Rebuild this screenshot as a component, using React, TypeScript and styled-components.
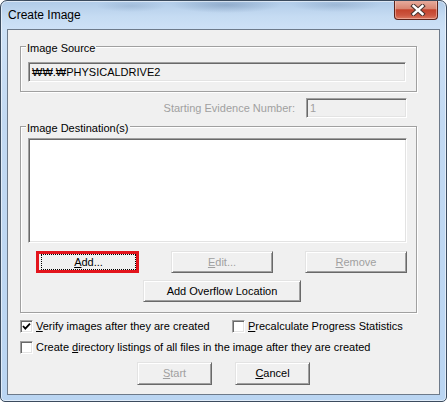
import React from "react";
import styled, { createGlobalStyle } from "styled-components";

const Global = createGlobalStyle`
  html, body { margin: 0; padding: 0; background: #ffffff; }
  body { font-family: "Liberation Sans", Arial, sans-serif; }
  #root { width: 447px; height: 402px; }
  * { box-sizing: border-box; }
`;

const Window = styled.div`
  width: 447px;
  height: 402px;
  border: 1px solid #3b4b5e;
  border-radius: 7px 7px 5px 5px;
  padding: 0 6px 6px;
  display: flex;
  flex-direction: column;
  overflow: hidden;
  box-shadow: inset 0 0 0 1px rgba(255, 255, 255, 0.55);
  background:
    radial-gradient(ellipse 55px 8px at 225px 4px, rgba(70, 100, 140, 0.32), transparent),
    radial-gradient(ellipse 45px 7px at 335px 4px, rgba(70, 100, 140, 0.22), transparent),
    radial-gradient(ellipse 35px 6px at 130px 5px, rgba(70, 100, 140, 0.18), transparent),
    linear-gradient(180deg, #b0cbe8 0px, #c5dbf2 15px, #cde1f6 28px, #c2d9f2 120px, #bad5f2 100%);
`;

const TitleBar = styled.div`
  height: 28px;
  display: flex;
  align-items: flex-start;
  justify-content: space-between;
  flex: none;
`;

const Title = styled.div`
  margin-top: 7px;
  padding-left: 1px;
  font-size: 12px;
  line-height: 14px;
  color: #000;
`;

const CloseButton = styled.div`
  width: 44px;
  height: 20px;
  margin-top: -1px;
  margin-right: 2px;
  border: 1px solid #5c231a;
  border-top: none;
  border-radius: 0 0 4px 4px;
  background: linear-gradient(180deg, #e8b0a2 0%, #d98672 45%, #c4432c 52%, #cc5640 80%, #dc7a62 100%);
  box-shadow: inset 0 0 0 1px rgba(255, 220, 210, 0.45);
  display: flex;
  align-items: center;
  justify-content: center;
`;

const Content = styled.div`
  flex: 1;
  border: 1px solid #6d7a8a;
  background: #f0f0f0;
  display: flex;
  flex-direction: column;
  align-items: flex-start;
  font-size: 11px;
  color: #000;
`;

const Group = styled.div<{ $top: number; $height: number }>`
  position: relative;
  width: 397px;
  height: ${(p) => p.$height}px;
  margin: ${(p) => p.$top}px 0 0 12px;
  border: 1px solid #a0a0a0;
  box-shadow: inset 1px 1px 0 #ffffff, 1px 1px 0 #ffffff;
  display: flex;
  flex-direction: column;
  align-items: flex-start;
`;

const GroupLabel = styled.div`
  position: absolute;
  top: -5px;
  left: 5px;
  padding: 0 1px;
  background: #f0f0f0;
  font-size: 11px;
  line-height: 13px;
  white-space: nowrap;
`;

const Sunken = styled.div<{ $bg: string }>`
  border: 1px solid;
  border-color: #a0a0a0 #ffffff #ffffff #a0a0a0;
  box-shadow: inset 1px 1px 0 #696969, inset -1px -1px 0 #e3e3e3;
  background: ${(p) => p.$bg};
`;

const SourceField = styled(Sunken)`
  width: 378px;
  height: 20px;
  margin: 15px 0 0 7px;
  padding-left: 3px;
  line-height: 18px;
  font-size: 11px;
  color: #000;
  white-space: nowrap;
  font-family: "Liberation Sans", "DejaVu Sans", "Noto Sans CJK KR", sans-serif;
`;

const EvidenceRow = styled.div`
  align-self: stretch;
  display: flex;
  justify-content: flex-end;
  align-items: center;
  gap: 11px;
  margin-top: 6px;
  padding-right: 32px;
`;

const DisabledText = styled.span`
  color: #a0a0a0;
  white-space: nowrap;
`;

const EvidenceField = styled(Sunken)`
  width: 101px;
  height: 20px;
  padding-left: 3px;
  line-height: 18px;
  color: #a0a0a0;
`;

const ListBox = styled(Sunken)`
  width: 379px;
  height: 105px;
  margin: 11px 0 0 7px;
`;

const ButtonRow = styled.div`
  display: flex;
  gap: 32px;
  margin: 8px 0 0 15px;
`;

const Button = styled.div<{ $w: number; $h?: number; $disabled?: boolean }>`
  width: ${(p) => p.$w}px;
  height: ${(p) => p.$h ?? 22}px;
  border: 1px solid;
  border-color: #e3e3e3 #696969 #696969 #e3e3e3;
  box-shadow: inset 1px 1px 0 #ffffff, inset -1px -1px 0 #a0a0a0;
  background: #f0f0f0;
  display: flex;
  align-items: center;
  justify-content: center;
  font-size: 11px;
  line-height: 13px;
  color: ${(p) => (p.$disabled ? "#a0a0a0" : "#000")};
  white-space: nowrap;
`;

const FocusedButton = styled.div`
  width: 103px;
  height: 22px;
  border: 3px solid #e3141c;
  background: #f0f0f0;
  display: flex;
`;

const FocusRing = styled.div`
  flex: 1;
  margin-left: 2px;
  border: 1px dotted #000;
  display: flex;
  align-items: center;
  justify-content: center;
  font-size: 11px;
  line-height: 13px;
  color: #000;
`;

const OverflowWrap = styled.div`
  margin: 7px 0 0 122px;
`;

const CheckRow = styled.div<{ $top: number }>`
  display: flex;
  align-items: center;
  height: 13px;
  margin: ${(p) => p.$top}px 0 0 12px;
`;

const CheckItem = styled.label<{ $w?: number }>`
  display: flex;
  align-items: center;
  gap: 3px;
  width: ${(p) => (p.$w ? `${p.$w}px` : "auto")};
  font-size: 11px;
  line-height: 13px;
  white-space: nowrap;
`;

const Box = styled.span`
  width: 13px;
  height: 13px;
  flex: none;
  border: 1px solid;
  border-color: #a0a0a0 #ffffff #ffffff #a0a0a0;
  box-shadow: inset 1px 1px 0 #696969, inset -1px -1px 0 #e3e3e3;
  background: #ffffff;
  display: flex;
  align-items: center;
  justify-content: center;
`;

const BottomButtons = styled.div`
  align-self: stretch;
  display: flex;
  justify-content: center;
  gap: 23px;
  margin-top: 8px;
`;

const Mn = styled.span`
  text-decoration: underline;
  text-underline-offset: 1px;
`;

const Check = () => (
  <svg width="9" height="9" viewBox="0 0 9 9">
    <polyline points="1,4 3.3,6.6 8,1.6" fill="none" stroke="#000" strokeWidth="1.8" />
  </svg>
);

const CloseX = () => (
  <svg width="16" height="12" viewBox="0 0 16 12" style={{ marginLeft: 4 }}>
    <path d="M3.5 2 L12.5 10 M12.5 2 L3.5 10" stroke="#4a3530" strokeWidth="4.4" strokeLinecap="square" />
    <path d="M3.5 2 L12.5 10 M12.5 2 L3.5 10" stroke="#ffffff" strokeWidth="2.4" strokeLinecap="square" />
  </svg>
);

export default function App() {
  return (
    <>
      <Global />
      <Window>
        <TitleBar>
          <Title>Create Image</Title>
          <CloseButton>
            <CloseX />
          </CloseButton>
        </TitleBar>
        <Content>
          <Group $top={16} $height={46}>
            <GroupLabel>Image Source</GroupLabel>
            <SourceField $bg="#f0f0f0">₩₩.₩PHYSICALDRIVE2</SourceField>
          </Group>

          <EvidenceRow>
            <DisabledText>Starting Evidence Number:</DisabledText>
            <EvidenceField $bg="#f0f0f0">1</EvidenceField>
          </EvidenceRow>

          <Group $top={8} $height={187}>
            <GroupLabel>Image Destination(s)</GroupLabel>
            <ListBox $bg="#ffffff" />
            <ButtonRow>
              <FocusedButton>
                <FocusRing>
                  <span>
                    <Mn>A</Mn>dd...
                  </span>
                </FocusRing>
              </FocusedButton>
              <Button $w={102} $disabled>
                <span>
                  <Mn>E</Mn>dit...
                </span>
              </Button>
              <Button $w={102} $disabled>
                <span>
                  <Mn>R</Mn>emove
                </span>
              </Button>
            </ButtonRow>
            <OverflowWrap>
              <Button $w={158}>Add Overflow Location</Button>
            </OverflowWrap>
          </Group>

          <CheckRow $top={7}>
            <CheckItem $w={212}>
              <Box>
                <Check />
              </Box>
              <span>
                <Mn>V</Mn>erify images after they are created
              </span>
            </CheckItem>
            <CheckItem>
              <Box />
              <span>
                <Mn>P</Mn>recalculate Progress Statistics
              </span>
            </CheckItem>
          </CheckRow>

          <CheckRow $top={8}>
            <CheckItem>
              <Box />
              <span>
                Create <Mn>d</Mn>irectory listings of all files in the image after they are created
              </span>
            </CheckItem>
          </CheckRow>

          <BottomButtons>
            <Button $w={75} $h={23} $disabled>
              <span>
                <Mn>S</Mn>tart
              </span>
            </Button>
            <Button $w={75} $h={23}>
              <span>
                <Mn>C</Mn>ancel
              </span>
            </Button>
          </BottomButtons>
        </Content>
      </Window>
    </>
  );
}
